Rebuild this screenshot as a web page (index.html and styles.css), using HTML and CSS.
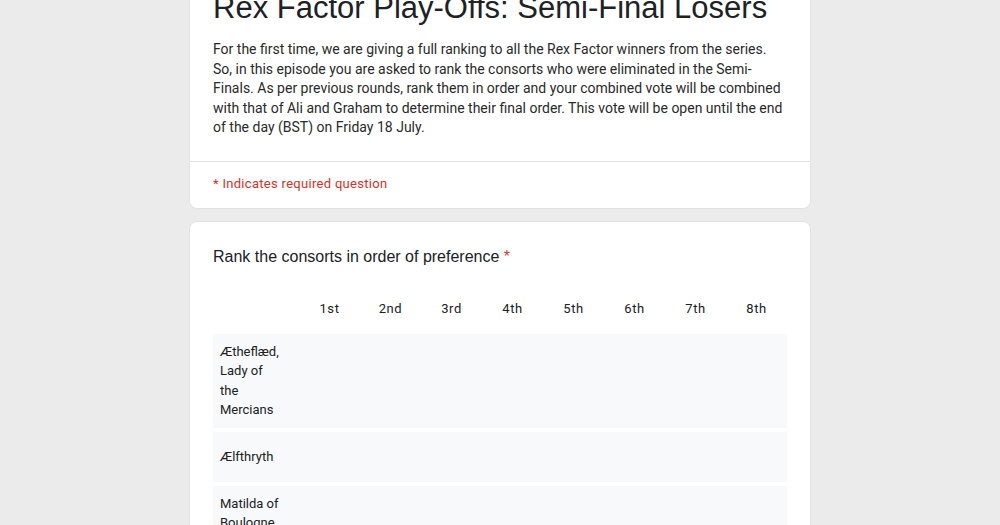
FILE: index.html
```html
<!DOCTYPE html>
<html lang="en">
<head>
    <meta charset="UTF-8">
    <title>Rex Factor Play-Offs: Semi-Final Losers</title>
    <link rel="stylesheet" href="styles.css">
</head>
<body>
    <div class="form">
        <div class="card header-card">
            <div class="header-main">
                <h1 class="form-title">Rex Factor Play-Offs: Semi-Final Losers</h1>
                <p class="form-desc">For the first time, we are giving a full ranking to all the Rex Factor winners from the series. So, in this episode you are asked to rank the consorts who were eliminated in the Semi-Finals. As per previous rounds, rank them in order and your combined vote will be combined with that of Ali and Graham to determine their final order. This vote will be open until the end of the day (BST) on Friday 18 July.</p>
            </div>
            <div class="required-note">* Indicates required question</div>
        </div>

        <div class="card question-card">
            <div class="question-title">Rank the consorts in order of preference <span class="star">*</span></div>
            <div class="grid">
                <div class="grid-head">
                    <div class="label-cell"></div>
                    <div class="col-head">1st</div>
                    <div class="col-head">2nd</div>
                    <div class="col-head">3rd</div>
                    <div class="col-head">4th</div>
                    <div class="col-head">5th</div>
                    <div class="col-head">6th</div>
                    <div class="col-head">7th</div>
                    <div class="col-head">8th</div>
                </div>
                <div class="grid-row">
                    <div class="label-cell">Ætheflæd, Lady of the Mercians</div>
                    <div class="cell"></div><div class="cell"></div><div class="cell"></div><div class="cell"></div>
                    <div class="cell"></div><div class="cell"></div><div class="cell"></div><div class="cell"></div>
                </div>
                <div class="grid-row">
                    <div class="label-cell">Ælfthryth</div>
                    <div class="cell"></div><div class="cell"></div><div class="cell"></div><div class="cell"></div>
                    <div class="cell"></div><div class="cell"></div><div class="cell"></div><div class="cell"></div>
                </div>
                <div class="grid-row">
                    <div class="label-cell">Matilda of Boulogne</div>
                    <div class="cell"></div><div class="cell"></div><div class="cell"></div><div class="cell"></div>
                    <div class="cell"></div><div class="cell"></div><div class="cell"></div><div class="cell"></div>
                </div>
            </div>
        </div>
    </div>
</body>
</html>
```

FILE: styles.css
```css
body {
    margin: 0;
    padding: 0;
    background-color: #ebebeb;
    font-family: Roboto, "Liberation Sans", Arial, sans-serif;
    color: #202124;
    overflow: hidden;
}
.form {
    width: 622px;
    margin: -37px auto 0;
    display: flex;
    flex-direction: column;
    gap: 12px;
}
.card {
    background-color: white;
    border-radius: 8px;
    border: 1px solid #e2e2e2;
}
.header-main {
    padding: 24px 23px 23px;
    border-bottom: 1px solid #e0e0e0;
}
.form-title {
    margin: 0;
    font-family: "Liberation Sans", Arial, sans-serif;
    font-weight: normal;
    font-size: 31px;
    line-height: 40px;
    color: #202124;
}
.form-desc {
    margin: 12px 0 0;
    font-size: 14px;
    line-height: 19.5px;
    color: #2a2a2a;
}
.required-note {
    padding: 12px 23px 14px;
    font-size: 13px;
    line-height: 20px;
    letter-spacing: 0.3px;
    color: #d93025;
}
.question-card {
    padding: 23px 23px 24px;
}
.question-title {
    font-family: "Liberation Sans", Arial, sans-serif;
    font-size: 16px;
    line-height: 24px;
}
.star {
    color: #d93025;
}
.grid {
    margin-top: 19px;
    display: flex;
    flex-direction: column;
    gap: 4px;
}
.grid-head,
.grid-row {
    display: grid;
    grid-template-columns: 86px repeat(8, 1fr);
    align-items: center;
}
.grid-head {
    height: 42px;
}
.col-head {
    text-align: center;
    font-size: 13px;
    letter-spacing: 0.6px;
}
.grid-row {
    background-color: #f8f9fa;
    min-height: 50px;
}
.label-cell {
    padding: 8px 18px 8px 7px;
    font-size: 13px;
    line-height: 19.5px;
}
.cell {
    align-self: stretch;
}
```
